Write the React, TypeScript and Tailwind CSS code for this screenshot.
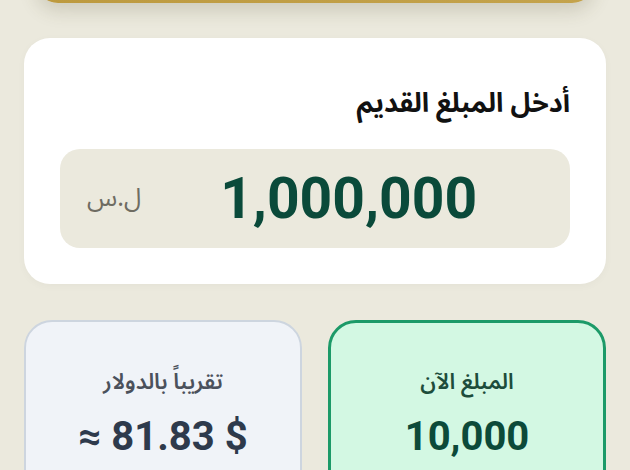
const arabic = "font-['Noto_Sans_Arabic','DejaVu_Sans',sans-serif]";
const digits = "font-['Roboto','Noto_Sans',sans-serif]";

const ResultCard = ({
  label,
  value,
  tone,
}: Readonly<{ label: string; value: string; tone: "green" | "slate" }>) => {
  const green = tone === "green";
  return (
    <div
      className={
        green
          ? "flex h-[190px] flex-col items-center rounded-[28px] border-[3px] border-[#1c9a68] bg-[#d3f8e3] pt-[42px]"
          : "flex h-[190px] flex-col items-center rounded-[28px] border-2 border-[#cdd5df] bg-[#f0f3f8] pt-[43px]"
      }
    >
      <span
        className={`${arabic} text-[22px] leading-[34px] font-semibold ${green ? "text-[#1d4d3b]" : "text-[#4b515c]"}`}
      >
        {label}
      </span>
      <span
        dir="ltr"
        className={`${digits} mt-[14px] text-[40px] leading-[48px] font-bold ${green ? "text-[#0c4a39]" : "text-[#2e3a4c]"}`}
      >
        {value}
      </span>
    </div>
  );
};

export default function App() {
  return (
    <div dir="rtl" className="min-h-screen overflow-hidden bg-[#ebe9dd] px-6">
      <div className="mx-3 -mt-[60px] h-[63px] rounded-b-[22px] bg-gradient-to-l from-[#c4a34c] to-[#bd9a3f] shadow-[0_8px_18px_rgba(80,70,40,0.18)]" />

      <section className="mt-[35px] rounded-[26px] bg-white px-9 pt-[44px] pb-9 shadow-[0_2px_8px_rgba(0,0,0,0.03)]">
        <h2 className={`${arabic} text-[27px] leading-[44px] font-bold text-[#111]`}>
          أدخل المبلغ القديم
        </h2>
        <div className="mt-[23px] flex h-[99px] items-center rounded-[20px] bg-[#ebe9dd] pr-[14px] pl-[27px]">
          <span
            dir="ltr"
            className={`${digits} flex-1 text-center text-[57px] leading-none font-bold text-[#0a4a3a]`}
          >
            1,000,000
          </span>
          <span className={`${arabic} text-[25px] text-[#6e6c62]`}>ل.س</span>
        </div>
      </section>

      <div className="mt-9 grid grid-cols-2 gap-[26px]">
        <ResultCard label="المبلغ الآن" value="10,000" tone="green" />
        <ResultCard label="تقريباً بالدولار" value="≈ 81.83 $" tone="slate" />
      </div>
    </div>
  );
}
